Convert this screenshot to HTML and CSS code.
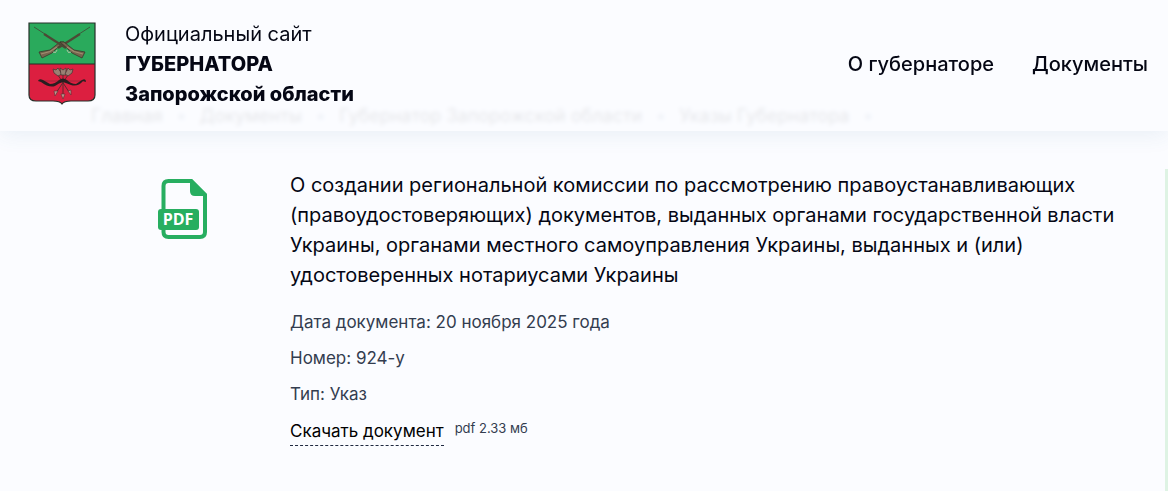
FILE: index.html
```html
<!DOCTYPE html>
<html lang="ru">
<head>
<meta charset="utf-8">
<meta name="viewport" content="width=device-width, initial-scale=1">
<title>Указ 924-у</title>
<link rel="stylesheet" href="styles.css">
</head>
<body>
<header class="header">
  <a class="brand" href="#">
    <svg class="brand-arms" viewBox="0 0 68 84" aria-hidden="true">
      <path d="M1 42H67V73Q67 79 60 79H43Q36 79 34 82Q32 79 25 79H8Q1 79 1 73Z" fill="#dc1f40"/>
      <path d="M1 1H67V42H1Z" fill="#2aaa5c"/>
      <path d="M1 42H67" stroke="#242d23" stroke-width="1.2"/>
      <path d="M1 1H67V73Q67 79 60 79H43Q36 79 34 82Q32 79 25 79H8Q1 79 1 73Z" fill="none" stroke="#26302a" stroke-width="1.2"/>
      <g id="gun">
        <path d="M62 5L48 14" stroke="#3d5a3c" stroke-width="1"/>
        <path d="M52 12L30 26" stroke="#4c4a35" stroke-width="2.2"/>
        <path d="M36 20L28 27L24 31L14 36L11 30L22 28L32 20Z" fill="#75664e" stroke="#39372a" stroke-width=".8"/>
        <path d="M13 32L22 29.500L29 25" fill="none" stroke="#a18d70" stroke-width="1.2"/>
        <path d="M25 30Q28 32 29 28" fill="none" stroke="#c3c2ac" stroke-width=".9"/>
      </g>
      <use href="#gun" transform="matrix(-1 0 0 1 68 0)"/>
      <g stroke="#5d2a2b" stroke-width="1" fill="none">
        <path d="M28 50L41 70M35 50V74M42 50L28 71"/>
        <path d="M12 59H57" stroke="#88283a" stroke-width=".7"/>
      </g>
      <g fill="#9a8073" stroke="#423330" stroke-width=".7">
        <path d="M25 47L28 48L30 46L34 52L30 54L26 51Z"/>
        <path d="M32 46L35 48L38 46L38 53H33Z"/>
        <path d="M45 47L42 48L40 46L37 52L40 54L44 51Z"/>
      </g>
      <path d="M10 59Q11 56 15 58L22 62Q27 62 31 58Q35 55 39 58Q43 62 48 62L54 58Q58 56 58 60L55 59Q50 65 43 63Q38 61 35 60Q31 61 27 64Q21 66 13 60Z" fill="#291e20"/>
      <path d="M26 69L30 69L27 74ZM33 72H37L35 77ZM40 69L43 68L43 73Z" fill="#bd958d" stroke="#5b3033" stroke-width=".6"/>
    </svg>
    <span class="brand-text">
      <span>Официальный сайт</span>
      <strong>ГУБЕРНАТОРА</strong>
      <strong>Запорожской области</strong>
    </span>
  </a>
  <nav class="nav">
    <a href="#">О губернаторе</a>
    <a href="#">Документы</a>
  </nav>
</header>
<main class="page">
  <nav class="crumbs" aria-label="Навигация">
    <a href="#">Главная</a><i>•</i><a href="#">Документы</a><i>•</i><a href="#">Губернатор Запорожской области</a><i>•</i><a href="#">Указы Губернатора</a><i>•</i>
  </nav>
  <div class="columns">
    <article class="document">
      <svg class="document-icon" viewBox="0 0 50 60" role="img" aria-label="PDF">
        <path d="M5.500 30V7Q5.500 2 10.500 2H33L47 16V53Q47 58 42 58H10.500Q5.500 58 5.500 53V48" fill="none" stroke="#27ae60" stroke-width="4"/>
        <path d="M32 0H34L49 15V17H37Q32 17 32 12Z" fill="#27ae60"/>
        <rect x="0" y="30" width="41" height="21" rx="3" fill="#27ae60"/>
        <text class="document-icon-label" x="20" y="46" text-anchor="middle">PDF</text>
      </svg>
      <div class="document-body">
        <h1 class="title">О создании региональной комиссии по рассмотрению правоустанавливающих (правоудостоверяющих) документов, выданных органами государственной власти Украины, органами местного самоуправления Украины, выданных и (или) удостоверенных нотариусами Украины</h1>
        <p class="meta">Дата документа: 20 ноября 2025 года</p>
        <p class="meta">Номер: 924-у</p>
        <p class="meta">Тип: Указ</p>
        <div class="download"><a href="#">Скачать документ</a><small>pdf 2.33 мб</small></div>
      </div>
    </article>
    <aside class="side"></aside>
  </div>
</main>
</body>
</html>
```
FILE: styles.css
```css
* { box-sizing: border-box; }
body {
  margin: 0;
  background: #fbfcff;
  color: #050714;
  font-family: Inter, "Noto Sans", sans-serif;
  overflow: hidden;
}
a { color: inherit; text-decoration: none; }
.header {
  position: fixed;
  inset: 0 0 auto;
  z-index: 1;
  display: flex;
  align-items: center;
  justify-content: space-between;
  padding: 19px 20px 22px 28px;
  background: rgba(251, 252, 255, 0.88);
  backdrop-filter: blur(2px);
  box-shadow: 0 4px 20px rgba(60, 110, 150, 0.09);
}
.brand { display: flex; align-items: center; gap: 29px; }
.brand-arms { width: 68px; height: 84px; }
.brand-text { display: flex; flex-direction: column; font-size: 20px; line-height: 30px; }
.brand-text strong { font-weight: 800; }
.nav { display: flex; gap: 38px; font-size: 20px; font-weight: 500; line-height: 30px; }
.page { display: flex; flex-direction: column; min-height: 100vh; padding-top: 104px; }
.crumbs { display: flex; padding-left: 91px; font-size: 18px; line-height: 24px; color: #555; white-space: nowrap; }
.crumbs i { width: 37px; text-align: center; font-style: normal; color: #9ab; }
.columns { display: grid; grid-template-columns: 1fr 3px; flex: 1; margin-top: 41px; }
.document {
  display: grid;
  grid-template-columns: 50px 1fr;
  column-gap: 82px;
  align-items: start;
  padding: 1px 40px 40px 158px;
}
.document-icon { width: 50px; height: 60px; margin-top: 9px; }
.document-icon-label { font: 700 16px "Open Sans", sans-serif; fill: #fff; }
.title { margin: 0 0 20px; font-size: 20px; font-weight: 400; line-height: 30px; }
.meta { margin: 0 0 12px; font-size: 17px; line-height: 24px; color: #333d4f; }
.download { display: flex; align-items: flex-start; gap: 11px; }
.download a { border-bottom: 1px dashed #1f2940; font-size: 17px; line-height: 27px; color: #000; }
.download small { font-size: 13px; line-height: 20px; color: #333d4f; }
.side { background: #def3e4; }
```
